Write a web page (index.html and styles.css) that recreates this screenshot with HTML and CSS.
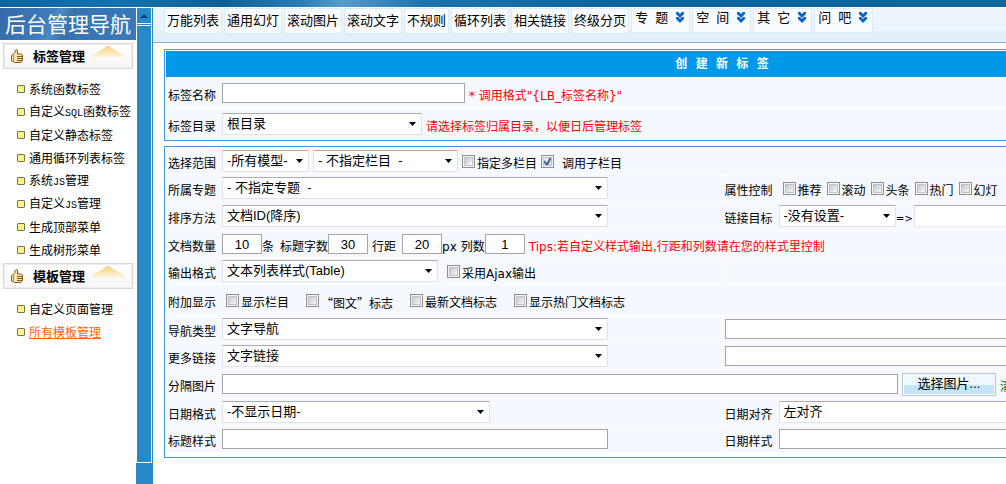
FILE: index.html
```html
<!DOCTYPE html>
<html lang="zh-CN">
<head>
<meta charset="utf-8">
<title>创建新标签</title>
<link rel="stylesheet" href="styles.css">
</head>
<body>
<svg class="defs" aria-hidden="true">
  <symbol id="hand" viewBox="0 0 12 14"><path d="M.5 6.500L2.500 5 4 3.500V1.500L5 .5l1.500 1V5H10l1.500 1v5.500L10 13.500H3.500L.5 12z" fill="#fbe3ad" stroke="#8a5a14"/><path d="M6 7.500h5M6 9.500h5M6 11.500h5" stroke="#8a5a14" fill="none"/><path d="M2.500 6v6" stroke="#c08a34" fill="none"/></symbol>
  <symbol id="more" viewBox="0 0 8 12"><path d="M0 0h2l2 2 2-2h2v2L4 6 0 2zM0 5h2l2 2 2-2h2v2l-4 4-4-4z" fill="#0a62c4"/></symbol>
</svg>
<div class="topbar"></div>
<div class="frame">
  <nav class="sidebar">
    <h1 class="brand">后台管理导航</h1>
    <h2 class="group"><svg class="hand"><use href="#hand"/></svg>标签管理<span class="glow"></span></h2>
    <ul class="links">
      <li><a href="#">系统函数标签</a></li>
      <li><a href="#">自定义<span class="latin">SQL</span>函数标签</a></li>
      <li><a href="#">自定义静态标签</a></li>
      <li><a href="#">通用循环列表标签</a></li>
      <li><a href="#">系统<span class="latin">JS</span>管理</a></li>
      <li><a href="#">自定义<span class="latin">JS</span>管理</a></li>
      <li><a href="#">生成顶部菜单</a></li>
      <li><a href="#">生成树形菜单</a></li>
    </ul>
    <h2 class="group"><svg class="hand"><use href="#hand"/></svg>模板管理<span class="glow"></span></h2>
    <ul class="links">
      <li><a href="#">自定义页面管理</a></li>
      <li><a href="#" class="current">所有模板管理</a></li>
    </ul>
  </nav>
  <div class="scroller">
    <button class="up" aria-label="向上滚动"><svg width="8" height="4" viewBox="0 0 8 4"><path d="M4 0l4 4H0z" fill="#003a8c"/></svg></button>
    <div class="thumb"></div>
    <div class="foot"></div>
  </div>
  <main class="main">
    <div class="toolbar">
      <button class="tool">万能列表</button>
      <button class="tool">通用幻灯</button>
      <button class="tool">滚动图片</button>
      <button class="tool">滚动文字</button>
      <button class="tool">不规则</button>
      <button class="tool">循环列表</button>
      <button class="tool">相关链接</button>
      <button class="tool">终级分页</button>
      <button class="tool menu">专&nbsp;&nbsp;题<svg class="more"><use href="#more"/></svg></button>
      <button class="tool menu">空&nbsp;&nbsp;间<svg class="more"><use href="#more"/></svg></button>
      <button class="tool menu">其&nbsp;&nbsp;它<svg class="more"><use href="#more"/></svg></button>
      <button class="tool menu">问&nbsp;&nbsp;吧<svg class="more"><use href="#more"/></svg></button>
    </div>
    <form class="form">
      <section class="panel basic">
        <h2 class="title">创&nbsp;&nbsp;建&nbsp;&nbsp;新&nbsp;&nbsp;标&nbsp;&nbsp;签</h2>
        <div class="row xl"><div class="cell">
          <label class="name" for="tag">标签名称</label><input class="box w243" id="tag"><span class="note">* 调用格式"{LB_标签名称}"</span>
        </div></div>
        <div class="row xl"><div class="cell">
          <label class="name" for="dir">标签目录</label><select class="pick w200" id="dir"><option>根目录</option></select><span class="note">请选择标签归属目录，以便日后管理标签</span>
        </div></div>
      </section>

      <section class="panel">
        <div class="row"><div class="cell">
          <label class="name" for="scope">选择范围</label><select class="pick w87" id="scope"><option>-所有模型-</option></select>
          <select class="pick w145 ml4" aria-label="栏目"><option>- 不指定栏目 &nbsp;-</option></select>
          <label class="check ml4"><input type="checkbox"><span>指定多栏目</span></label>
          <label class="check ml4 wide"><input type="checkbox" checked><span>调用子栏目</span></label>
        </div></div>
        <div class="row split">
          <div class="cell"><label class="name" for="topic">所属专题</label><select class="pick w386" id="topic"><option>- 不指定专题 &nbsp;-</option></select></div>
          <div class="cell"><span class="name">属性控制</span>
            <div class="attrs">
              <label class="check"><input type="checkbox"><span>推荐</span></label>
              <label class="check"><input type="checkbox"><span>滚动</span></label>
              <label class="check"><input type="checkbox"><span>头条</span></label>
              <label class="check"><input type="checkbox"><span>热门</span></label>
              <label class="check"><input type="checkbox"><span>幻灯</span></label>
            </div>
          </div>
        </div>
        <div class="row split lg">
          <div class="cell"><label class="name" for="order">排序方法</label><select class="pick w386" id="order"><option>文档ID(降序)</option></select></div>
          <div class="cell"><label class="name" for="target">链接目标</label><select class="pick w117" id="target"><option>-没有设置-</option></select><span class="text arrow">=&gt;</span><input class="box soft fill" aria-label="目标"></div>
        </div>
        <div class="row"><div class="cell">
          <label class="name" for="count">文档数量</label><input class="box num" id="count" value="10"><span class="text">条</span>
          <label class="text ml6" for="len">标题字数</label><input class="box num" id="len" value="30">
          <label class="text ml4" for="gap">行距</label><input class="box num ml6" id="gap" value="20"><span class="text">px</span>
          <label class="text ml4" for="cols">列数</label><input class="box num" id="cols" value="1"><span class="note">Tips:若自定义样式输出,行距和列数请在您的样式里控制</span>
        </div></div>
        <div class="row split">
          <div class="cell"><label class="name" for="fmt">输出格式</label><select class="pick w216" id="fmt"><option>文本列表样式(Table)</option></select>
          <label class="check ml9"><input type="checkbox"><span>采用Ajax输出</span></label></div>
          <div class="cell"></div>
        </div>
        <div class="row xl"><div class="cell">
          <span class="name">附加显示</span>
          <div class="extras">
            <label class="check"><input type="checkbox"><span>显示栏目</span></label>
            <label class="check"><input type="checkbox"><span class="quoted">“图文”标志</span></label>
            <label class="check"><input type="checkbox"><span>最新文档标志</span></label>
            <label class="check"><input type="checkbox"><span>显示热门文档标志</span></label>
          </div>
        </div></div>
        <div class="row split">
          <div class="cell"><label class="name" for="nav">导航类型</label><select class="pick w386" id="nav"><option>文字导航</option></select></div>
          <div class="cell"><input class="box fill" aria-label="导航文字"></div>
        </div>
        <div class="row split">
          <div class="cell"><label class="name" for="link">更多链接</label><select class="pick w386" id="link"><option>文字链接</option></select></div>
          <div class="cell"><input class="box fill" aria-label="链接文字"></div>
        </div>
        <div class="row lg"><div class="cell">
          <label class="name" for="pic">分隔图片</label><input class="box w676" id="pic"><button type="button" class="choose">选择图片...</button><a class="clear" href="#">清除</a>
        </div></div>
        <div class="row split">
          <div class="cell"><label class="name" for="date">日期格式</label><select class="pick w268" id="date"><option>-不显示日期-</option></select></div>
          <div class="cell"><label class="name" for="align">日期对齐</label><select class="pick fill" id="align"><option>左对齐</option></select></div>
        </div>
        <div class="row split">
          <div class="cell"><label class="name" for="tstyle">标题样式</label><input class="box w386" id="tstyle"></div>
          <div class="cell"><label class="name" for="dstyle">日期样式</label><input class="box fill" id="dstyle"></div>
        </div>
      </section>
    </form>
  </main>
</div>
</body>
</html>
```
FILE: styles.css
```css
* { box-sizing: border-box; }
body {
  margin: 0;
  min-height: 100vh;
  display: flex;
  flex-direction: column;
  background: #fff;
  color: #000;
  font: 12px/16px "DejaVu Sans", "Noto Sans CJK SC", sans-serif;
}
button, input, select { margin: 0; font: 13px/16px "Liberation Sans", "Noto Sans CJK SC", sans-serif; color: #000; }
h1, h2, ul { margin: 0; padding: 0; }
.defs { display: none; }

.topbar {
  height: 7px;
  background: linear-gradient(100deg, #0d659f 0, #1671ac 12%, #0c5f99 22%, #2b7db4 30%, #5a9cca 34%, #1d73ad 42%, #0c649f 60%, #0f679f 100%);
}
.frame { flex: 1; display: flex; padding-top: 1px; }

/* sidebar */
.sidebar { flex: none; width: 136px; }
.brand {
  height: 32px;
  padding-left: 5px;
  background: linear-gradient(115deg, #3568a8 0, #3f7dba 35%, #4c8bc4 42%, #3873b0 50%, #3a7ab8 100%);
  color: #fff;
  font: 21px/30px "Noto Sans CJK SC", sans-serif;
  white-space: nowrap;
}
.group {
  display: flex;
  align-items: center;
  height: 26px;
  margin: 3px 3px 0;
  padding-left: 6px;
  border: 1px solid #d9d9d9;
  box-shadow: inset 0 0 0 1px #ededed;
  background: linear-gradient(#fff, #f6f6f6);
  font: bold 13px/20px "Noto Sans CJK SC", sans-serif;
}
.links + .group { margin-top: 1px; }
.hand { width: 12px; height: 14px; margin: 0 10px 0 1px; }
.glow {
  width: 38px;
  height: 12px;
  margin: -9px 0 0 4px;
  background: linear-gradient(#fbd07a, #fdf3dc 90%);
  clip-path: polygon(50% 0, 100% 100%, 0 100%);
}
.links { padding-top: 8px; padding-bottom: 1px; list-style: none; }
.links li { display: flex; align-items: center; height: 23px; padding-left: 17px; white-space: nowrap; }
.links li::before { content: ""; width: 6px; height: 6px; margin-right: 5px; border: 1px solid #77734a; border-radius: 1px; background: #fbf38a; flex: none; }
.links a { color: #000; text-decoration: none; margin-left: -1px; font-family: "Noto Sans CJK SC", sans-serif; }
.links .current { color: #f60; text-decoration: underline; }
.latin { font: 10px/12px "Liberation Mono", monospace; }

/* scroll strip */
.scroller { flex: none; width: 17px; display: flex; flex-direction: column; border-right: 1px solid #268ac6; }
.up { height: 15px; margin: 0 1px; padding: 0; border: 0; background: #268ac6; display: flex; align-items: center; justify-content: center; }
.thumb { flex: 1; margin: 1px 1px 0; border-top: 1px solid #268ac6; background: #268ac6; box-shadow: inset 0 1px #fff; }
.foot { height: 22px; border-top: 1px solid #fff; background: #268ac6; }

/* toolbar */
.main { flex: 1; min-width: 0; overflow: hidden; }
.toolbar {
  display: flex;
  align-items: flex-start;
  gap: 2px;
  height: 35px;
  padding-left: 11px;
  border-bottom: 1px solid #8ab4ce;
  background: linear-gradient(#edf5fc 23px, #e3f0fa 23px);
}
.tool {
  flex: none;
  height: 26px;
  padding: 0 2px;
  border: 1px solid #d8ecf7;
  background: #f8fbff;
  white-space: nowrap;
}
.menu { display: flex; align-items: center; height: 25px; width: 59px; padding: 0 3px 5px; }
.more { width: 8px; height: 12px; margin-left: 8px; }

/* form */
.form { min-width: 1138px; padding: 6px 11px; }
.panel { padding: 1px 1px 4px; border: 1px solid #4096e4; }
.basic { margin-bottom: 5px; padding-bottom: 0; }
.title { height: 26px; margin-bottom: 1px; background: #0099e9; color: #fff; font-size: 12px; line-height: 26px; text-align: center; }
.row { display: grid; height: 27px; border-bottom: 1px solid #fff; }
.row.lg { height: 29px; }
.row.xl { height: 31px; }
.split { grid-template-columns: 1fr 1fr; gap: 1px; }
.cell { display: flex; align-items: center; padding: 0 2px; background: #f5f9ff; white-space: nowrap; }
.name { flex: none; width: 54px; padding-top: 5px; }
.text { padding-top: 5px; }
.arrow { width: 18px; text-align: center; font-size: 10px; }
.note { padding: 5px 0 0 4px; color: #f00; }
.box { flex: none; height: 20px; padding: 0 3px; border: 1px solid #a5a5a5; background: #fff; outline: 0; }
.box.soft { height: 22px; border-color: #abadb3 #e3e9ef #e3e9ef #e2e3ea; }
.num { width: 40px; text-align: center; }
.pick {
  flex: none;
  appearance: none;
  height: 22px;
  padding: 0 16px 1px 4px;
  border: 1px solid #e2e3ea;
  border-top-color: #abadb3;
  border-radius: 1px;
  background: #fff url("data:image/svg+xml,%3Csvg xmlns='http://www.w3.org/2000/svg' width='7' height='4'%3E%3Cpath d='M0 0h7L3.500 4z'/%3E%3C/svg%3E") no-repeat right 5px center;
}
.fill { flex: 1; }
.w87 { width: 87px; }
.w117 { width: 117px; }
.w145 { width: 145px; }
.w200 { width: 200px; }
.w216 { width: 216px; }
.w243 { width: 243px; }
.w268 { width: 268px; }
.w386 { width: 386px; }
.w676 { width: 676px; }
.ml4 { margin-left: 4px; }
.ml6 { margin-left: 6px; }
.ml9 { margin-left: 9px; }

.check { display: flex; align-items: center; gap: 2px; }
.check span { padding-top: 5px; }
.check.wide { gap: 8px; }
.check input {
  appearance: none;
  width: 13px;
  height: 13px;
  border: 1px solid #8e8f8f;
  background: linear-gradient(135deg, #c4c8ce, #f6f6f6) content-box, #f4f4f4;
  padding: 2px;
  box-shadow: inset 0 0 0 1px #f4f4f4, inset 0 0 0 2px #bfc3c9;
}
.check input:checked {
  background: url("data:image/svg+xml,%3Csvg xmlns='http://www.w3.org/2000/svg' width='11' height='11'%3E%3Cpath d='M2 5l3 4 4-8' fill='none' stroke='%23405f9e' stroke-width='2'/%3E%3C/svg%3E") no-repeat, #e4e8ee;
}
.attrs { display: flex; gap: 5px; padding-left: 4px; }
.extras { display: flex; gap: 17px; padding-left: 4px; }
.quoted { font-family: "Noto Sans CJK SC", sans-serif; }

.choose {
  width: 94px;
  height: 23px;
  margin-left: 4px;
  padding: 0;
  border: 1px solid #c3c7cb;
  background: linear-gradient(#eef8fd 50%, #c3e5f8 50%);
  box-shadow: inset 0 0 0 1px #f2f8fc;
}
.clear { margin-left: 4px; padding-top: 5px; color: #008000; text-decoration: none; }
```
